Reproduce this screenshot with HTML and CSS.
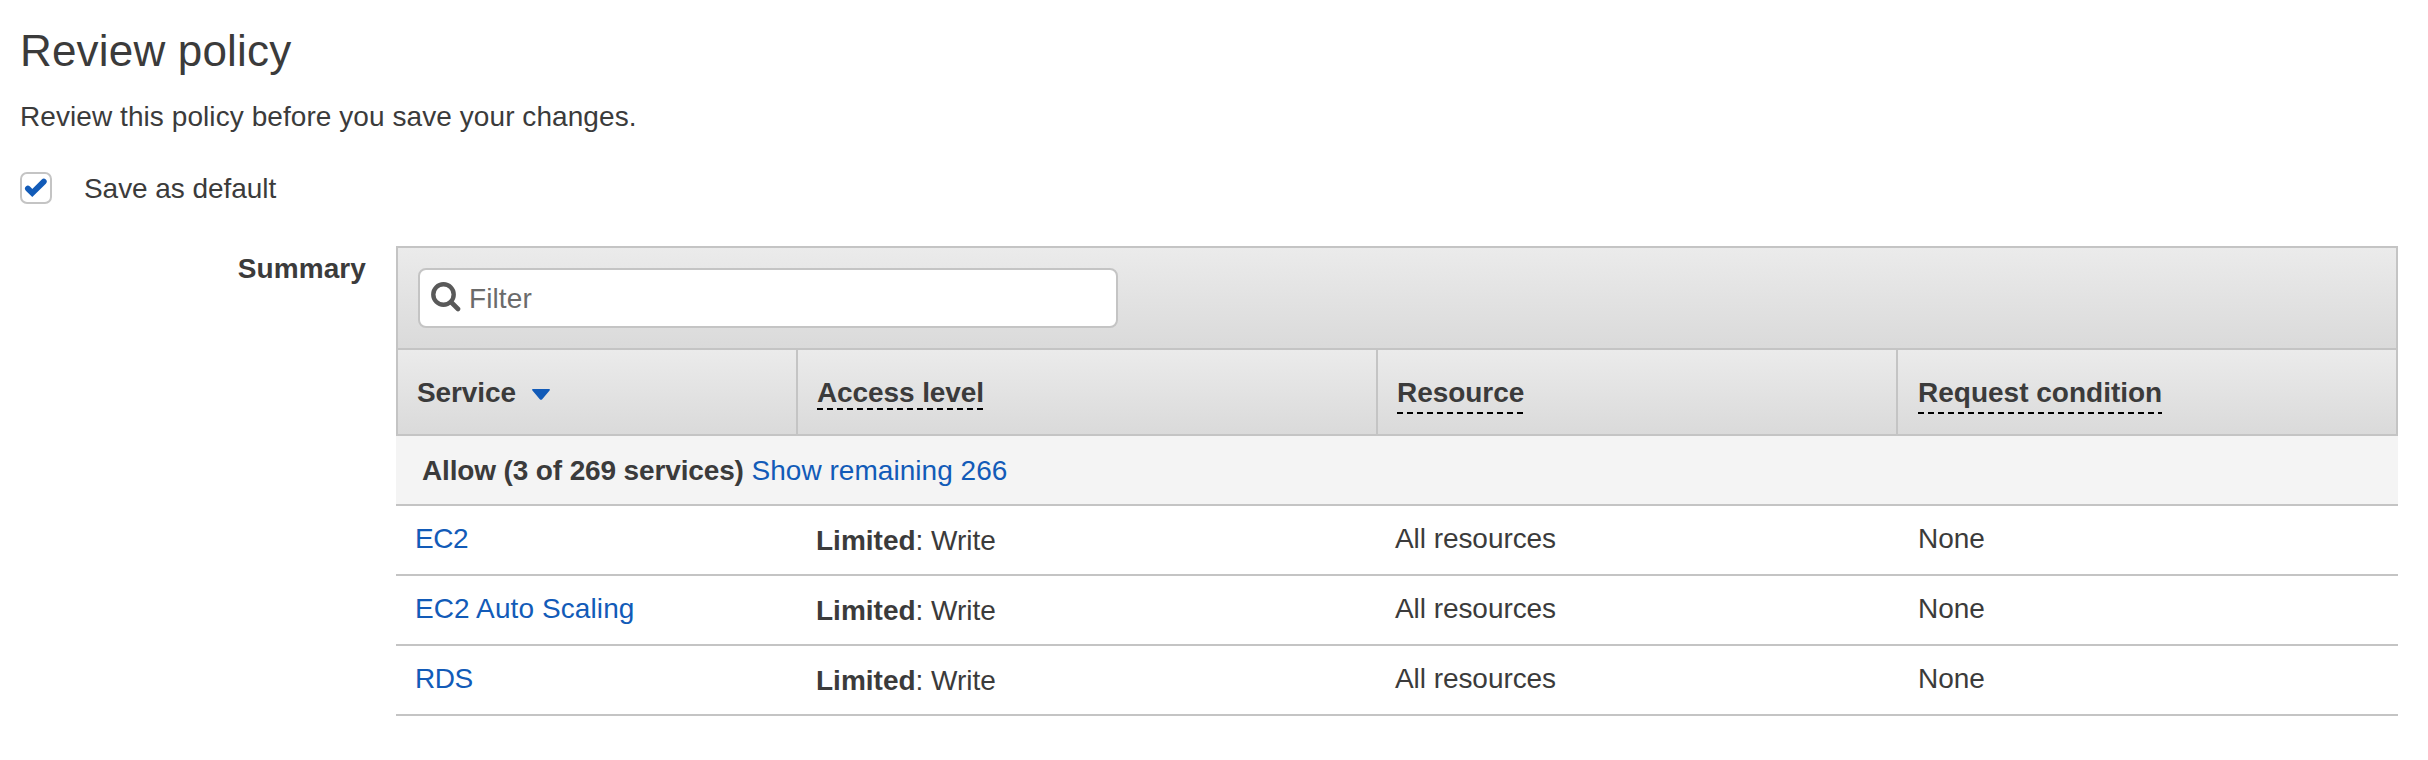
FILE: index.html
```html
<!DOCTYPE html>
<html lang="en">
<head>
<meta charset="utf-8">
<title>Review policy</title>
<link rel="stylesheet" href="styles.css">
</head>
<body>
<main class="page">
  <h1 class="title">Review policy</h1>
  <p class="intro">Review this policy before you save your changes.</p>
  <label class="save-default">
    <span class="checkbox">
      <svg class="check" viewBox="0 0 28 28" width="28" height="28"><path d="M5.9 14.6 10.3 19 21.8 7.6" fill="none" stroke="#125bb8" stroke-width="5.8" stroke-linecap="round" stroke-linejoin="miter"/></svg>
    </span>
    <span class="save-text">Save as default</span>
  </label>
  <section class="summary">
    <h2 class="summary-label">Summary</h2>
    <div class="panel">
      <div class="toolbar">
        <div class="filter">
          <svg class="search" viewBox="0 0 30 30" width="30" height="30"><circle cx="12.5" cy="12.5" r="10.2" fill="none" stroke="#595959" stroke-width="4.4"/><path d="M20 20 27 27" stroke="#595959" stroke-width="4.6" stroke-linecap="round"/></svg>
          <span class="filter-text">Filter</span>
        </div>
      </div>
      <div class="row head">
        <div class="cell"><span class="service">Service</span><svg class="caret" viewBox="0 0 18 11" width="18" height="11"><path d="M.8 0H17.2Q18.4 .5 17.6 1.4L10.2 10.3Q9 11.4 7.8 10.3L.4 1.4Q-.4 .5 .8 0Z" fill="#125bb8"/></svg></div>
        <div class="cell"><span class="hint hint-tight access">Access level</span></div>
        <div class="cell"><span class="hint resource">Resource</span></div>
        <div class="cell"><span class="hint condition">Request condition</span></div>
      </div>
      <div class="group"><b class="allow">Allow (3 of 269 services)</b> <a class="link show">Show remaining 266</a></div>
      <div class="row item">
        <div class="cell"><a class="link short">EC2</a></div>
        <div class="cell level"><b>Limited</b>: Write</div>
        <div class="cell all">All resources</div>
        <div class="cell">None</div>
      </div>
      <div class="row item">
        <div class="cell"><a class="link long">EC2 Auto Scaling</a></div>
        <div class="cell level"><b>Limited</b>: Write</div>
        <div class="cell all">All resources</div>
        <div class="cell">None</div>
      </div>
      <div class="row item">
        <div class="cell"><a class="link short">RDS</a></div>
        <div class="cell level"><b>Limited</b>: Write</div>
        <div class="cell all">All resources</div>
        <div class="cell">None</div>
      </div>
    </div>
  </section>
</main>
</body>
</html>
```

FILE: styles.css
```css
* { box-sizing: border-box; }
body {
  margin: 0;
  background: #fff;
  color: #3b3b3b;
  font: 28px/36px "Liberation Sans", Arial, sans-serif;
}
.page { padding: 24px 30px 0 20px; height: 760px; overflow: hidden; }
.title { margin: 0; font-size: 44px; line-height: 54px; font-weight: 400; letter-spacing: 0.18px; }
.intro { margin: 21px 0 0; letter-spacing: 0.07px; }
.save-default { display: flex; align-items: center; gap: 32px; margin-top: 35px; height: 36px; }
.save-text { padding-top: 2px; letter-spacing: -0.06px; }
.checkbox {
  display: flex;
  width: 32px;
  height: 32px;
  border: 2px solid #c4c4c4;
  border-radius: 7px;
}
.summary { display: grid; grid-template-columns: 346px 2002px; column-gap: 30px; margin-top: 40px; }
.summary-label { margin: 5px 0 0; font-size: 28px; line-height: 36px; font-weight: 700; text-align: right; letter-spacing: 0.1px; }
.toolbar {
  height: 104px;
  padding: 20px;
  border: 2px solid #c4c4c4;
  background: linear-gradient(#ebebeb, #dadada);
}
.filter {
  display: flex;
  align-items: center;
  width: 700px;
  height: 60px;
  padding-left: 11px;
  border: 2px solid #c4c4c4;
  border-radius: 8px;
  background: #fff;
}
.search { margin-top: -2px; }
.filter-text { margin-left: 8px; padding-top: 1px; color: #6b6b6b; letter-spacing: 0.1px; }
.row { display: grid; grid-template-columns: 400px 580px 520px 1fr; }
.head {
  height: 86px;
  border: 2px solid #c4c4c4;
  border-top: 0;
  background: linear-gradient(#ebebeb, #dadada);
  font-weight: 700;
}
.head .cell { padding: 25px 18px 0 19px; border-right: 2px solid #c4c4c4; }
.head .cell:last-child { padding-left: 20px; border-right: 0; }
.service { letter-spacing: -0.1px; }
.caret { margin-left: 16px; vertical-align: 2px; }
.hint {
  display: inline-block;
  height: 39px;
  background: repeating-linear-gradient(90deg, #000 0 6px, transparent 6px 10px) left bottom / 100% 2px no-repeat;
}
.hint-tight { height: 35px; }
.access { letter-spacing: -0.1px; }
.resource { letter-spacing: -0.05px; }
.group {
  height: 70px;
  padding: 17px 26px;
  border-bottom: 2px solid #c4c4c4;
  background: #f4f4f4;
}
.allow { letter-spacing: -0.14px; }
.show { letter-spacing: 0.03px; }
.item { height: 70px; border-bottom: 2px solid #c4c4c4; grid-template-columns: 400px 579px 523px 1fr; }
.item .cell { padding: 15px 20px 0; }
.item .cell:first-child { padding-left: 19px; }
.item .level { padding-top: 17px; }
.item .all { letter-spacing: -0.06px; }
.link { color: #125bb8; }
.short { letter-spacing: -0.5px; }
.long { letter-spacing: 0.1px; }
```
